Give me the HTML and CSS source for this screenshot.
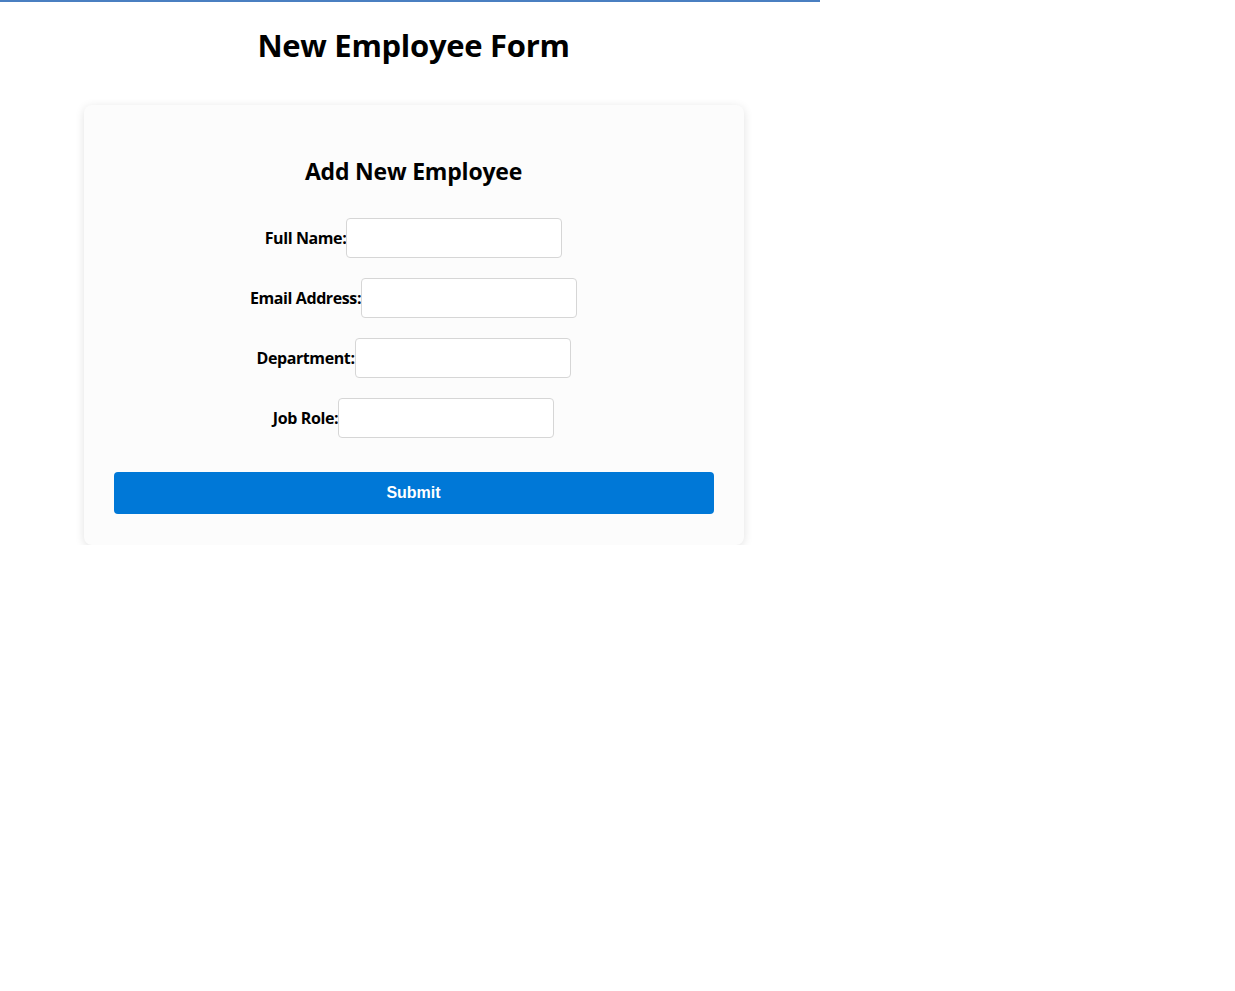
FILE: index.html
```html
<!DOCTYPE html>
<html lang="en">
<head>
<meta charset="utf-8">
<title>New Employee Form</title>
<link rel="stylesheet" href="styles.css">
</head>
<body>
<div class="topline"></div>
<main class="page">
  <h1 class="title">New Employee Form</h1>
  <form class="card">
    <h2 class="card-title">Add New Employee</h2>
    <div class="row"><label class="label" for="name">Full Name:</label><input class="input" id="name" type="text"></div>
    <div class="row"><label class="label" for="email">Email Address:</label><input class="input" id="email" type="email"></div>
    <div class="row"><label class="label" for="dept">Department:</label><input class="input" id="dept" type="text"></div>
    <div class="row"><label class="label" for="role">Job Role:</label><input class="input" id="role" type="text"></div>
    <button class="submit" type="button">Submit</button>
  </form>
</main>
</body>
</html>
```
FILE: styles.css
```css
html, body {
  margin: 0;
  padding: 0;
  background: #ffffff;
}
body {
  font-family: "Open Sans", "Noto Sans", sans-serif;
  color: #000;
}
.topline {
  width: 820px;
  height: 2px;
  background: #4a7fc1;
}
.page {
  width: 827px;
  display: flex;
  flex-direction: column;
  align-items: center;
}
.title {
  margin: 21px 0 0;
  font-size: 31px;
  line-height: 44px;
  font-weight: 700;
  letter-spacing: -0.3px;
}
.card {
  margin-top: 38px;
  width: 660px;
  box-sizing: border-box;
  padding: 30px 30px 31px;
  background: #fcfcfc;
  border-radius: 8px;
  box-shadow: 0 2px 10px rgba(0, 0, 0, 0.12);
  display: flex;
  flex-direction: column;
  align-items: center;
}
.card-title {
  margin: 20px 0 31px;
  font-size: 23px;
  line-height: 32px;
  font-weight: 700;
  letter-spacing: -0.2px;
}
.row {
  display: flex;
  align-items: center;
  justify-content: center;
  margin-bottom: 20px;
}
.label {
  font-size: 16px;
  font-weight: 700;
  letter-spacing: -0.4px;
}
.input {
  width: 216px;
  height: 40px;
  box-sizing: border-box;
  border: 1px solid #d6d6d6;
  border-radius: 4px;
  background: #fff;
  padding: 0 8px;
  margin: 0;
}
.submit {
  margin-top: 14px;
  width: 600px;
  height: 42px;
  border: none;
  border-radius: 4px;
  background: #0078d7;
  color: #fff;
  font-family: "Liberation Sans", Arial, sans-serif;
  font-weight: 700;
  font-size: 16px;
}
```
